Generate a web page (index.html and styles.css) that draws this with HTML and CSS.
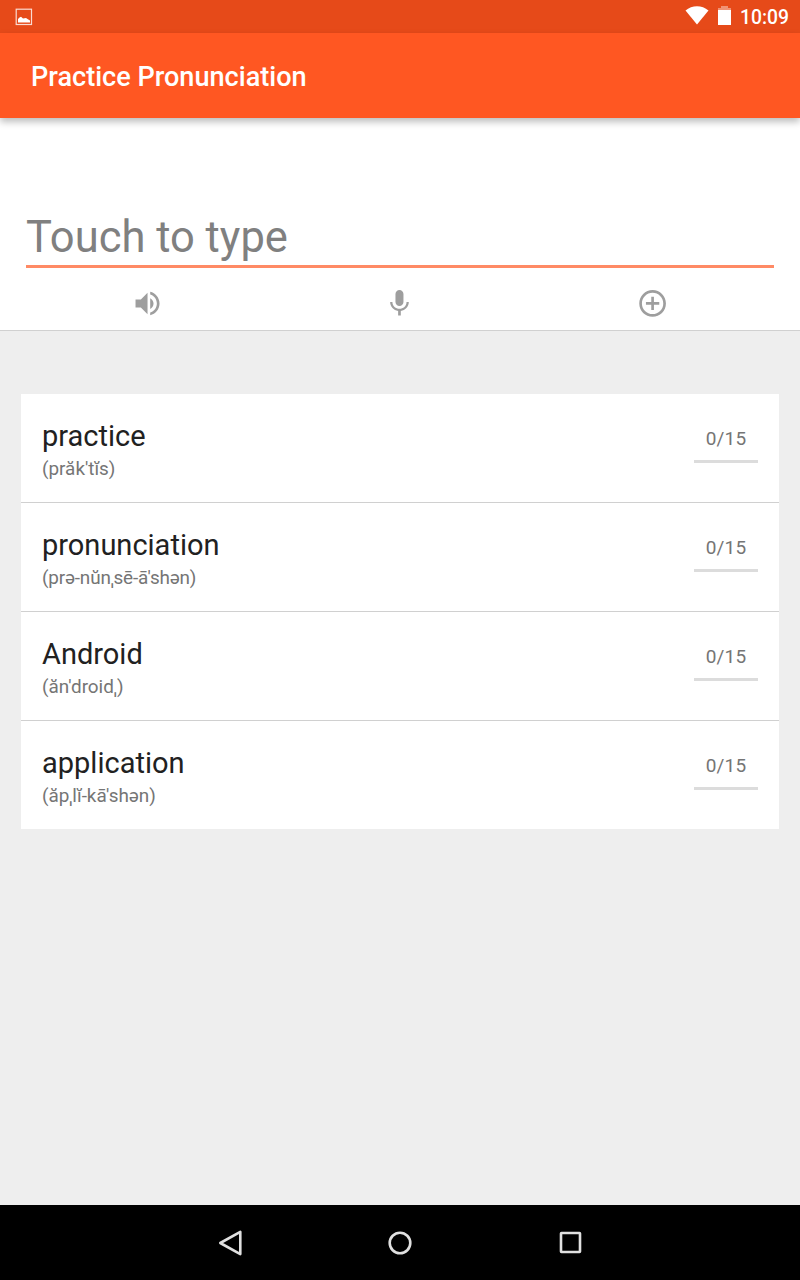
FILE: index.html
```html
<!DOCTYPE html>
<html lang="en">
<head>
<meta charset="utf-8">
<title>Practice Pronunciation</title>
<link rel="stylesheet" href="styles.css">
</head>
<body>
<div class="screen">
  <div class="status">
    <svg class="shot" width="18" height="18" viewBox="0 0 18 18"><rect x="1.200" y="1.200" width="15.300" height="15.300" fill="none" stroke="#fff" stroke-opacity=".8" stroke-width="1.200"/><path d="M3 14.500V11L4.500 9.500L6 8.800L8 10.500L11 10L12.500 11L15 12.500V14.500Z" fill="#fff"/></svg>
    <svg class="wifi" width="24" height="20" viewBox="0 0 24 20"><path d="M.5 4.500C7-1.200 17-1.200 23.500 4.500L12 18.500Z" fill="#fff"/></svg>
    <svg class="battery" width="13" height="19" viewBox="0 0 13 19"><path d="M0 2H3V0H10V2H13V4H0Z" fill="#fff" fill-opacity=".4"/><path d="M0 4H13V19H0Z" fill="#fff"/></svg>
    <span class="clock">10:09</span>
  </div>
  <header class="appbar"><h1 class="title">Practice Pronunciation</h1></header>
  <section class="entry">
    <div class="field">Touch to type</div>
    <div class="actions">
      <div class="action"><svg class="icon" viewBox="-.4 -.4 24 24"><path d="M3 9v6h4l5 5V4L7 9H3zm13.500 3c0-1.770-1.020-3.290-2.500-4.030v8.050c1.480-.73 2.500-2.250 2.500-4.020zM14 3.230v2.060c2.890.86 5 3.540 5 6.710s-2.110 5.850-5 6.710v2.060c4.010-.91 7-4.490 7-8.770s-2.990-7.860-7-8.770z"/></svg></div>
      <div class="action"><svg class="icon" viewBox=".4 -.3 24 24"><path d="M12 14c1.660 0 2.990-1.340 2.990-3L15 5c0-1.660-1.340-3-3-3S9 3.340 9 5v6c0 1.660 1.340 3 3 3zm5.300-3c0 3-2.540 5.100-5.300 5.100S6.700 14 6.700 11H5c0 3.410 2.720 6.230 6 6.720V21h2v-3.280c3.280-.48 6-3.300 6-6.720h-1.700z"/></svg></div>
      <div class="action"><svg class="icon" viewBox=".3 -.3 24 24"><path d="M13 7h-2v4H7v2h4v4h2v-4h4v-2h-4V7zm-1-5C6.480 2 2 6.480 2 12s4.480 10 10 10 10-4.480 10-10S17.520 2 12 2zm0 18c-4.410 0-8-3.590-8-8s3.590-8 8-8 8 3.590 8 8-3.590 8-8 8z"/></svg></div>
    </div>
  </section>
  <main class="content">
    <ul class="words">
      <li class="row"><div><div class="word">practice</div><div class="phon">(prăk'tĭs)</div></div><div class="score">0/15</div></li>
      <li class="row"><div><div class="word">pronunciation</div><div class="phon tight">(prə-nŭnˌsē-ā'shən)</div></div><div class="score">0/15</div></li>
      <li class="row"><div><div class="word">Android</div><div class="phon">(ăn'droidˌ)</div></div><div class="score">0/15</div></li>
      <li class="row"><div><div class="word">application</div><div class="phon">(ăpˌlĭ-kā'shən)</div></div><div class="score">0/15</div></li>
    </ul>
  </main>
  <nav class="navbar">
    <svg class="key" viewBox="-.8 0 32 32"><path d="M5.500 16L25.500 4.900V27.100Z"/></svg>
    <svg class="key" viewBox="0 0 32 32"><circle cx="16" cy="16" r="10.300"/></svg>
    <svg class="key" viewBox=".5 0 32 32"><rect x="6.500" y="6" width="19" height="19" rx=".5"/></svg>
  </nav>
</div>
</body>
</html>
```
FILE: styles.css
```css
body { margin: 0; font-family: Roboto, "Noto Sans", sans-serif; }
.screen { width: 800px; height: 1280px; display: flex; flex-direction: column; background: #eee; overflow: hidden; }
.status { height: 33px; flex: none; background: #e64a19; display: flex; align-items: center; padding: 0 11px 0 15px; color: #fff; box-sizing: border-box; }
.shot { margin-right: auto; }
.wifi { margin: 0 9px 2px 0; }
.battery { margin: 0 9px 2px 0; }
.clock { font-size: 19.300px; font-weight: 500; line-height: 33px; padding-top: 2px; }
.appbar { height: 85px; flex: none; background: #ff5722; display: flex; align-items: center; padding-left: 31px; box-shadow: 0 4px 7px rgba(0, 0, 0, .26); z-index: 1; }
.title { margin: 0; color: #fff; font-size: 27.100px; font-weight: 500; line-height: 32px; padding-top: 3px; }
.entry { height: 212px; flex: none; background: #fff; border-bottom: 1px solid #d0d0d0; }
.field { margin: 87px 26px 0; height: 60px; line-height: 66px; border-bottom: 3px solid #ff8a65; color: #808080; font-size: 43.500px; }
.actions { display: grid; grid-template-columns: repeat(3, 1fr); margin: 19px 21px 0; }
.action { display: flex; justify-content: center; }
.icon { width: 32px; height: 32px; fill: #9e9e9e; }
.content { flex: 1; padding: 63px 21px 0; }
.words { margin: 0; padding: 0; list-style: none; background: #fff; }
.row { display: flex; justify-content: space-between; align-items: flex-start; height: 108px; padding: 0 21px; border-bottom: 1px solid #d0d0d0; }
.row:last-child { border-bottom: 0; }
.word { font-size: 29px; line-height: 34px; padding-top: 25px; color: #212121; }
.phon { font-size: 18.900px; line-height: 22px; margin-top: 5px; color: #757575; }
.tight { letter-spacing: -.16px; }
.score { width: 64px; height: 31px; margin-top: 35px; line-height: 19px; text-align: center; font-size: 19px; letter-spacing: .2px; color: #757575; border-bottom: 3px solid #dcdcdc; }
.navbar { height: 75px; flex: none; background: #000; display: flex; align-items: center; justify-content: center; gap: 138.500px; }
.key { width: 32px; height: 32px; fill: none; stroke: #e0e0e0; stroke-width: 2.600; stroke-linejoin: round; }
```
